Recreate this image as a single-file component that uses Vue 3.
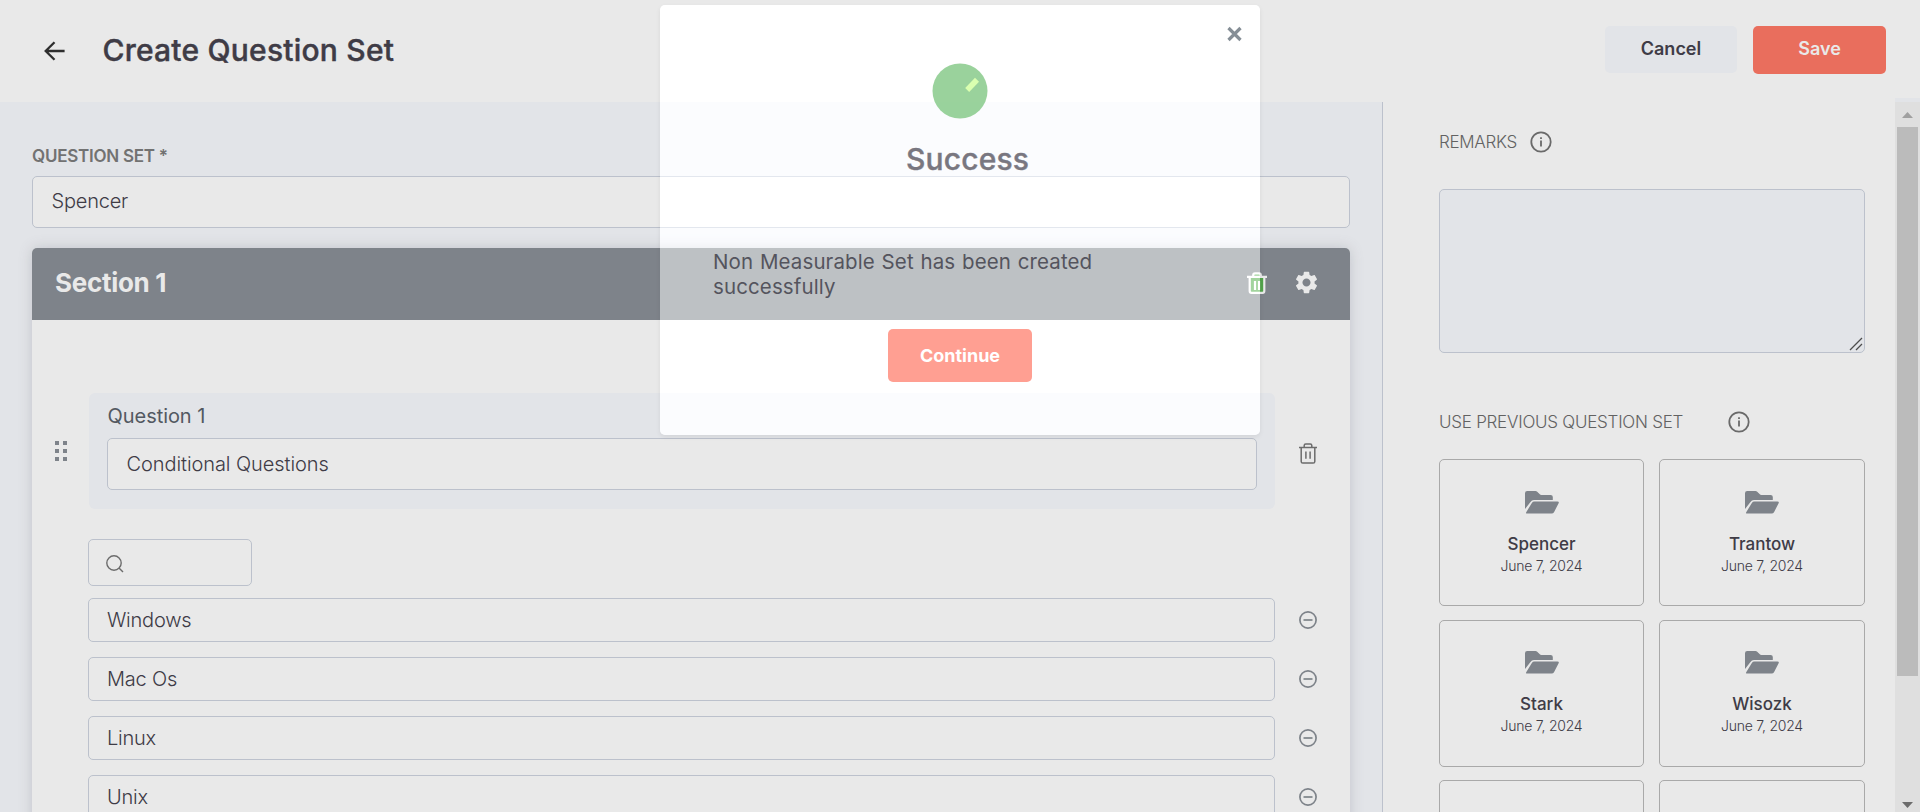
<script setup>
const options = ['Windows', 'Mac Os', 'Linux', 'Unix']
const sets = [
  { name: 'Spencer', date: 'June 7, 2024' },
  { name: 'Trantow', date: 'June 7, 2024' },
  { name: 'Stark', date: 'June 7, 2024' },
  { name: 'Wisozk', date: 'June 7, 2024' },
]
</script>

<template>
  <div class="page">
    <header class="topbar">
      <svg class="back" width="22" height="20" viewBox="0 0 22 20"><path d="M10.5 1.2 1.7 10l8.8 8.8M2 10h18.6" /></svg>
      <h1><span>Create Question Set</span></h1>
      <button class="btn cancel"><span>Cancel</span></button>
      <button class="btn save"><span>Save</span></button>
    </header>

    <div class="body">
      <main class="main">
        <label class="label"><span>QUESTION SET *</span></label>
        <div class="input set-name"><span>Spencer</span></div>
        <section class="section">
          <div class="section-head">
            <h2><span>Section 1</span></h2>
            <svg class="trash-green" width="20" height="23" viewBox="0 0 20 23">
              <path class="fill" d="M3.2 5.5 6 4V2h8v2l2.8 1.5V21H3.2z" />
              <path class="line" d="M0 4.8h20M6.2 4.4V3.2q0-1.8 1.8-1.8h4q1.8 0 1.8 1.8v1.2M2.7 5v14q0 1.9 1.8 1.9h11q1.8 0 1.8-1.9V5M8 9v9M12 9v9" />
            </svg>
            <svg class="gear" width="27" height="27" viewBox="0 0 24 24"><path d="M19.14 12.94c.04-.3.06-.61.06-.94 0-.32-.02-.64-.07-.94l2.03-1.58c.18-.14.23-.41.12-.61l-1.92-3.32c-.12-.22-.37-.29-.59-.22l-2.39.96c-.5-.38-1.03-.7-1.62-.94l-.36-2.54c-.04-.24-.24-.41-.48-.41h-3.84c-.24 0-.43.17-.47.41l-.36 2.54c-.59.24-1.13.57-1.62.94l-2.39-.96c-.22-.08-.47 0-.59.22L2.74 8.87c-.12.21-.08.47.12.61l2.03 1.58c-.05.3-.09.63-.09.94s.02.64.07.94l-2.03 1.58c-.18.14-.23.41-.12.61l1.92 3.32c.12.22.37.29.59.22l2.39-.96c.5.38 1.03.7 1.62.94l.36 2.54c.05.24.24.41.48.41h3.84c.24 0 .44-.17.47-.41l.36-2.54c.59-.24 1.13-.56 1.62-.94l2.39.96c.22.08.47 0 .59-.22l1.92-3.32c.12-.22.07-.47-.12-.61l-2.01-1.58zM12 15.6c-1.98 0-3.6-1.62-3.6-3.6s1.62-3.6 3.6-3.6 3.6 1.62 3.6 3.6-1.62 3.6-3.6 3.6z" /></svg>
          </div>
          <div class="question-row">
            <div class="drag"><i v-for="n in 6" :key="n"></i></div>
            <div class="question">
              <div class="q-title"><span>Question 1</span></div>
              <div class="input"><span>Conditional Questions</span></div>
            </div>
            <svg class="trash" width="18" height="21" viewBox="0 0 18 21"><path d="M0 4.5h18M5.2 4.2V2.6Q5.2 1 6.8 1h4.4q1.6 0 1.6 1.6v1.6M2.2 4.8v13.6q0 1.6 1.6 1.6h10.4q1.6 0 1.6-1.6V4.8M6.9 8.5v7.2M11.1 8.5v7.2" /></svg>
          </div>
          <div class="search">
            <svg width="18" height="18" viewBox="0 0 18 18"><circle cx="8" cy="8" r="7.2" /><path d="m13 13 4 4" /></svg>
          </div>
          <div v-for="o in options" :key="o" class="option">
            <div class="option-box"><span>{{ o }}</span></div>
            <svg class="minus" width="18" height="18" viewBox="0 0 18 18"><circle cx="9" cy="9" r="8.1" /><path d="M4.5 9h9" /></svg>
          </div>
        </section>
      </main>

      <aside class="side">
        <div class="side-title remarks">
          <span>REMARKS</span>
          <svg class="info" width="22" height="22" viewBox="0 0 22 22"><circle cx="11" cy="11" r="9.7" /><path d="M11 9.6v6M11 6.2v1.9" /></svg>
        </div>
        <div class="textarea">
          <svg width="14" height="14" viewBox="0 0 14 14"><path d="M1 13 13 1M7 13l6-6" /></svg>
        </div>
        <div class="side-title previous">
          <span>USE PREVIOUS QUESTION SET</span>
          <svg class="info" width="22" height="22" viewBox="0 0 22 22"><circle cx="11" cy="11" r="9.7" /><path d="M11 9.6v6M11 6.2v1.9" /></svg>
        </div>
        <div class="cards">
          <div v-for="s in sets" :key="s.name" class="card">
            <svg width="34" height="23" viewBox="0 0 34 23">
              <path d="M0 18V2.2Q0 0 2.2 0h8.3q1 0 1.7.7l2.6 2.6q.6.6 1.5.6h9.3q2.2 0 2.2 2.2v2.8H9Q6.7 8.9 5.5 11z" />
              <path d="M1.2 21.2 7 11.8q.8-1.3 2.3-1.3h23.2q1.9 0 1.1 1.8L29 21.2q-.8 1.3-2.3 1.3H1.9q-1.3 0-.7-1.3z" />
            </svg>
            <b><span>{{ s.name }}</span></b>
            <small><span>{{ s.date }}</span></small>
          </div>
          <div class="card"></div>
          <div class="card"></div>
        </div>
      </aside>

      <div class="scrollbar">
        <svg class="up" width="11" height="6" viewBox="0 0 11 6"><path d="M5.5 0 11 6H0z" /></svg>
        <div class="thumb"></div>
        <svg class="down" width="11" height="6" viewBox="0 0 11 6"><path d="M0 0h11L5.5 6z" /></svg>
      </div>
    </div>

    <div class="modal">
      <div class="modal-content">
        <svg class="close" width="15" height="16" viewBox="0 0 15 16"><path d="m1.5 2 12 12m0-12-12 12" /></svg>
        <svg class="tick" width="56" height="56" viewBox="0 0 56 56">
          <circle cx="28" cy="28" r="27.5" />
          <path d="m43 14.7 4 4L37.2 29l-4-4z" />
        </svg>
        <h3><span>Success</span></h3>
        <p><span class="line-one">Non Measurable Set has been created</span><br /><span>successfully</span></p>
        <button class="continue"><span>Continue</span></button>
      </div>
    </div>
  </div>
</template>

<style>
html,
body {
  margin: 0;
  overflow: hidden;
}
</style>

<style scoped>
* {
  box-sizing: border-box;
}
.page {
  position: relative;
  width: 1920px;
  height: 812px;
  overflow: hidden;
  display: flex;
  flex-direction: column;
  background: #fff;
  color: #45424d;
  font-family: Inter, 'Liberation Sans', sans-serif;
  font-size: 20px;
}
svg {
  display: block;
  flex: none;
}
h1, h2, h3, p {
  margin: 0;
}
span {
  white-space: nowrap;
}
.topbar {
  height: 102px;
  flex: none;
  display: flex;
  align-items: flex-start;
  padding: 26px 34px 0 44px;
}
.back {
  margin-top: 15px;
  fill: none;
  stroke: #333;
  stroke-width: 2.3;
}
h1 {
  margin-left: 36.5px;
  margin-right: auto;
  line-height: 48px;
  font-size: 30px;
  font-weight: 500;
  letter-spacing: 0.22px;
  -webkit-text-stroke: 0.4px currentColor;
}
.btn {
  border: 0;
  padding: 0;
  border-radius: 5px;
  font: 600 18px/44px Inter, sans-serif;
}
.btn span {
  display: block;
  height: 46px;
}
.cancel {
  width: 132px;
  height: 47px;
  margin-right: 16px;
  background: #f8fafe;
  color: #45424d;
}
.save {
  width: 133px;
  height: 48px;
  background: #ff7966;
  color: #fff;
}
.body {
  flex: 1;
  min-height: 0;
  display: flex;
}
.main {
  width: 1383px;
  flex: none;
  padding: 42px 32px 0;
  background: #f8fafe;
  border-right: 1px solid #ced4e0;
  overflow: hidden;
}
.label {
  display: block;
  height: 32px;
  line-height: 24px;
  font-size: 17px;
  font-weight: 600;
  letter-spacing: -0.25px;
  color: #7d7d7d;
}
.input {
  height: 52px;
  line-height: 51px;
  padding-left: 18.5px;
  border: 1px solid #ced4e0;
  border-radius: 5px;
  background: #fff;
  font-weight: 300;
  letter-spacing: -0.08px;
}
.set-name {
  line-height: 49px;
  letter-spacing: -0.2px;
}
.section {
  height: 700px;
  margin-top: 20px;
  border-radius: 5px;
  background: #fff;
  box-shadow: 0 0 14px rgba(90, 95, 110, 0.22);
}
.section-head {
  height: 72px;
  display: flex;
  align-items: center;
  padding: 0 30.5px 2px 23px;
  border-radius: 5px 5px 0 0;
  background: #8a9097;
  color: #fff;
}
h2 {
  margin-right: auto;
  line-height: 70px;
  font-size: 26px;
  font-weight: 700;
  letter-spacing: -0.3px;
}
.trash-green {
  margin-right: 25.5px;
}
.trash-green .fill {
  fill: #5ab352;
}
.trash-green .line {
  fill: none;
  stroke: #fff;
  stroke-width: 2.2;
}
.gear {
  margin-top: -1px;
  fill: #fff;
}
.main .input,
.section,
.option {
  width: 1318px;
}
.question-row {
  height: 116px;
  margin-top: 73px;
  display: flex;
}
.drag {
  width: 57px;
  padding: 48px 22px 0 23px;
  display: grid;
  grid-template-columns: 4px 4px;
  grid-auto-rows: 4px;
  gap: 4px;
}
.drag i {
  background: #8a9097;
}
.question {
  width: 1186px;
  padding: 12px 18px 0;
  border-radius: 6px;
  background: #f8fafe;
}
.q-title {
  height: 33px;
  line-height: 22px;
  padding-left: 0.5px;
  letter-spacing: -0.05px;
  color: #5b626b;
}
.main .question .input {
  width: 1150px;
}
.trash {
  margin: 50px 0 0 24px;
  fill: none;
  stroke: #777;
  stroke-width: 1.5;
}
.search {
  width: 164px;
  height: 47px;
  margin: 30px 0 12px 56px;
  padding: 15px 0 0 17px;
  border: 1px solid #ced4e0;
  border-radius: 5px;
}
.search svg {
  fill: none;
  stroke: #777;
  stroke-width: 1.4;
}
.option {
  display: flex;
  align-items: center;
  height: 44px;
  margin-bottom: 15px;
  padding-left: 56px;
}
.option-box {
  width: 1187px;
  height: 44px;
  line-height: 42px;
  padding-left: 18px;
  border: 1px solid #ced4e0;
  border-radius: 5px;
  font-weight: 300;
  letter-spacing: -0.22px;
}
.minus {
  margin-left: 24px;
  fill: none;
  stroke: #8a9097;
  stroke-width: 1.7;
}
.side {
  width: 512px;
  padding: 28px 30px 0 56px;
  overflow: hidden;
  background: #fff;
}
.side-title {
  display: flex;
  align-items: center;
  height: 24px;
  font-size: 17px;
  font-weight: 300;
  letter-spacing: -0.3px;
  color: #6c6c6c;
}
.info {
  fill: none;
  stroke: #757575;
  stroke-width: 1.8;
}
.remarks .info {
  margin-left: 13px;
}
.previous .info {
  margin-left: 44.5px;
}
.textarea {
  height: 164px;
  margin: 35px 0 57px;
  padding: 0 1px 1px 0;
  display: flex;
  justify-content: flex-end;
  align-items: flex-end;
  border: 1px solid #ced4e0;
  border-radius: 5px;
  background: #f8fafe;
}
.textarea svg {
  fill: none;
  stroke: #555;
  stroke-width: 1.3;
}
.previous {
  letter-spacing: -0.25px;
}
.cards {
  margin-top: 25px;
  display: grid;
  grid-template-columns: 205px 206px;
  grid-auto-rows: 147px;
  gap: 13.5px 15px;
}
.card {
  display: flex;
  flex-direction: column;
  align-items: center;
  padding-top: 31px;
  border: 1px solid #b9b9b9;
  border-radius: 5px;
}
.card:nth-child(n + 3) {
  padding-top: 30px;
}
.card svg {
  fill: #8a9097;
}
.card b {
  margin-top: 18px;
  height: 24px;
  line-height: 24px;
  font-size: 17px;
  font-weight: 500;
}
.card small {
  height: 20px;
  line-height: 20px;
  font-size: 14px;
  font-weight: 300;
  letter-spacing: -0.25px;
}
.scrollbar {
  width: 25px;
  height: 714px;
  margin-top: -4px;
  border-top: 4px solid #f8fafe;
  background: #f4f4f4;
  display: flex;
  flex-direction: column;
  align-items: center;
}
.up {
  margin-top: 10px;
  fill: #b0b0b0;
}
.thumb {
  width: 21px;
  height: 549px;
  margin: 9px 0 126px;
  background: #cdcdcd;
}
.down {
  fill: #777;
}
.modal {
  position: absolute;
  left: 660px;
  top: 4.5px;
  width: 600px;
  height: 430px;
  border-radius: 5px;
  background: rgba(255, 255, 255, 0.44);
  box-shadow: 0 2px 5px rgba(0, 0, 0, 0.07), 0 0 0 1920px rgba(0, 0, 0, 0.088);
}
.modal-content {
  position: relative;
  display: flex;
  flex-direction: column;
  align-items: center;
  opacity: 0.71;
  padding-top: 58px;
}
.close {
  position: absolute;
  right: 18px;
  top: 21.5px;
  fill: none;
  stroke: #54616c;
  stroke-width: 3.2;
}
.tick circle {
  fill: #72c175;
}
.tick path {
  fill: #ccff90;
}
h3 {
  margin: 18px 0 0 15px;
  line-height: 44px;
  font-size: 30px;
  font-weight: 500;
  letter-spacing: 0.16px;
  -webkit-text-stroke: 0.4px currentColor;
}
p {
  width: 494px;
  margin-top: 68px;
  margin-bottom: 0.5px;
  line-height: 25px;
  font-size: 20.5px;
  font-weight: 400;
  letter-spacing: 0.12px;
  color: #2a2834;
}
.line-one {
  word-spacing: 0.8px;
}
.continue {
  width: 144px;
  height: 53px;
  margin-top: 30px;
  padding: 0;
  border: 0;
  border-radius: 5px;
  background: #ff7966;
  color: #fff;
  font: 700 18px/52px Inter, sans-serif;
}
</style>
